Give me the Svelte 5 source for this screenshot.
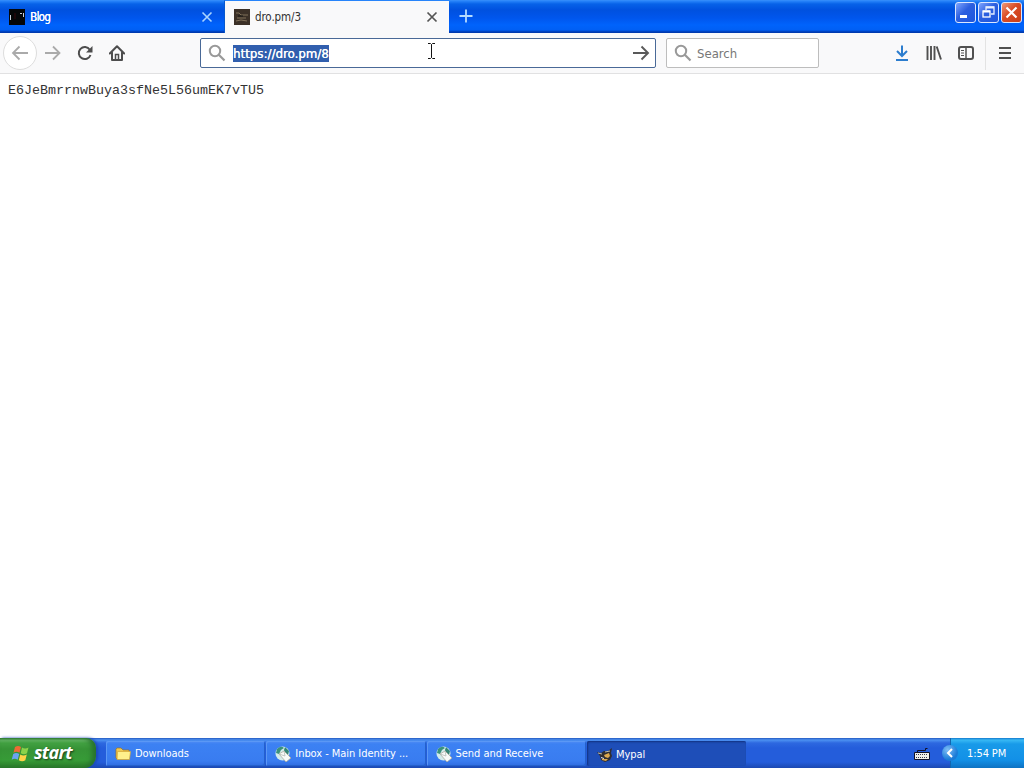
<script>
  const tasks = [
    { label: 'Downloads', icon: 'folder' },
    { label: 'Inbox - Main Identity ...', icon: 'mail' },
    { label: 'Send and Receive', icon: 'mail' },
    { label: 'Mypal', icon: 'mypal', active: true }
  ];
</script>

<div class="screen">
  <header class="titlebar">
    <div class="tab first">
      <svg class="fav" width="16" height="16" viewBox="0 0 16 16"><rect width="16" height="16" fill="#050608" /><path d="M1.500 6v5M14.500 4v4" stroke="#c8ced8" /><path d="M11 4.500h2" stroke="#c8d0dc" fill="none" /><path d="M6 4v6" stroke="#35070b" /></svg>
      <span class="label blog">Blog</span>
      <svg class="close" width="12" height="12" viewBox="0 0 12 12"><path d="M1.500 1.500l9 9M10.500 1.500l-9 9" stroke="#a9d5ff" stroke-width="1.600" /></svg>
    </div>
    <div class="tab active">
      <svg class="fav" width="16" height="16" viewBox="0 0 16 16"><rect width="16" height="16" fill="#3b3027" /><path d="M2 4h3l2 2h7M3 9h9M2 12l5-1 6 1" stroke="#80705a" fill="none" /><path d="M4 7h5" stroke="#151513" /></svg>
      <span class="label">dro.pm/3</span>
      <svg class="close" width="12" height="12" viewBox="0 0 12 12"><path d="M1.500 1.500l9 9M10.500 1.500l-9 9" stroke="#555" stroke-width="1.700" /></svg>
    </div>
    <svg class="plus" width="14" height="14" viewBox="0 0 14 14"><path d="M7 .5v13M.5 7h13" stroke="#b5dcff" stroke-width="1.800" /></svg>
    <div class="controls">
      <span class="ctl"><svg width="19" height="19" viewBox="0 0 19 19"><path d="M4 13.500h7" stroke="#fff" stroke-width="3" /></svg></span>
      <span class="ctl"><svg width="19" height="19" viewBox="0 0 19 19"><path d="M7 7V4h8v7h-3" fill="none" stroke="#e6efff" stroke-width="1.300" /><path d="M7 4.500h8" stroke="#e6efff" stroke-width="2" /><rect x="4" y="8" width="7" height="6" fill="none" stroke="#fff" stroke-width="1.300" /><path d="M4 8.500h7" stroke="#fff" stroke-width="2" /></svg></span>
      <span class="ctl red"><svg width="19" height="19" viewBox="0 0 19 19"><path d="M4.500 4.500l10 10M14.500 4.500l-10 10" stroke="#fff" stroke-width="2.200" /></svg></span>
    </div>
  </header>

  <nav class="toolbar">
    <span class="back"><svg width="18" height="16" viewBox="0 0 18 16"><path d="M17 8H2M8.500 1.500L2 8l6.500 6.500" fill="none" stroke="#aaa" stroke-width="1.800" /></svg></span>
    <svg class="forward" width="18" height="16" viewBox="0 0 18 16"><path d="M1 8h14M9 1.500L15.500 8 9 14.500" fill="none" stroke="#aaa" stroke-width="1.800" /></svg>
    <svg class="reload" width="16" height="16" viewBox="0 0 16 16"><path d="M12.800 4.700A6 6 0 1 0 13.500 10" fill="none" stroke="#4d4d4d" stroke-width="2" /><path d="M15.500 1v6.500H9z" fill="#4d4d4d" /></svg>
    <svg class="home" width="16" height="16" viewBox="0 0 16 16"><path d="M.8 8.500L8 1.300l7.200 7.200M3 7.500V15h10V7.500" fill="none" stroke="#4d4d4d" stroke-width="2" stroke-linejoin="round" stroke-linecap="round" /><path d="M6.500 14V9.500h3V14" fill="none" stroke="#4d4d4d" stroke-width="1.500" /></svg>
    <div class="field url">
      <svg width="18" height="18" viewBox="0 0 18 18"><circle cx="7" cy="7" r="5.200" fill="none" stroke="#999" stroke-width="2" /><path d="M10.800 10.800l5.700 5.700" stroke="#999" stroke-width="2.200" /></svg>
      <span class="address">https://dro.pm/8</span>
      <svg class="caret" width="9" height="16" viewBox="0 0 9 16"><path d="M1 .5h2.500l1 1 1-1H8M4.500 1.500v13M1 15.500h2.500l1-1 1 1H8" fill="none" stroke="#111" /></svg>
      <svg class="go" width="18" height="16" viewBox="0 0 18 16"><path d="M1 8h14.500M9.500 1.500L16 8l-6.500 6.500" fill="none" stroke="#595959" stroke-width="1.900" /></svg>
    </div>
    <div class="field search">
      <svg width="18" height="18" viewBox="0 0 18 18"><circle cx="7" cy="7" r="5.200" fill="none" stroke="#999" stroke-width="2" /><path d="M10.800 10.800l5.700 5.700" stroke="#999" stroke-width="2.200" /></svg>
      <span>Search</span>
    </div>
    <div class="tools">
      <svg width="16" height="16" viewBox="0 0 16 16"><path d="M8 .5v10M3 6l5 5 5-5M2 15h12" fill="none" stroke="#2c7dce" stroke-width="2" /></svg>
      <svg width="16" height="16" viewBox="0 0 16 16"><path d="M1.500 1v14M5 1v14M8.500 1v14M10.700 1.500l4.300 13" fill="none" stroke="#505050" stroke-width="1.900" /></svg>
      <svg width="16" height="16" viewBox="0 0 16 16"><rect x="1" y="2" width="14" height="12" rx="2" fill="none" stroke="#505050" stroke-width="2" /><path d="M8 2v12" stroke="#505050" stroke-width="1.500" /><path d="M3 5.500h3M3 8h3M3 10.500h3" stroke="#505050" /></svg>
      <i></i>
      <svg width="14" height="16" viewBox="0 0 14 16"><path d="M1 3h12M1 8h12M1 13h12" stroke="#505050" stroke-width="2" /></svg>
    </div>
  </nav>

  <main><pre>E6JeBmrrnwBuya3sfNe5L56umEK7vTU5</pre></main>

  <footer class="taskbar">
    <div class="start">
      <svg width="19" height="19" viewBox="0 0 19 19"><path d="M4 3q3-2 6 0L8.500 8.800q-3-2-6 0z" fill="#ef6a35" /><path d="M11 3.400q3 2 6.500 0L16 9.200q-3 2-6.300 0z" fill="#8bd24a" /><path d="M2.200 10q3-2 6 0l-1.500 5.700q-3-2-6 0z" fill="#6ba3f0" /><path d="M9.300 10.400q3 2 6.500 0l-1.500 5.800q-3 2-6.500 0z" fill="#ffd247" /></svg>
      <span>start</span>
    </div>
    <div class="tasks">
      {#each tasks as task}
        <div class="task" class:pressed={task.active}>
          {#if task.icon === 'folder'}
            <svg width="16" height="16" viewBox="0 0 16 16"><path d="M1 12V3l1-1h4l2 2h6v9H2z" fill="#f0c850" stroke="#987127" stroke-width=".7" /><path d="M2.500 5.500H15.500l-1 8H2z" fill="#fff08c" stroke="#d3a535" stroke-width=".7" /></svg>
          {:else if task.icon === 'mail'}
            <svg width="16" height="16" viewBox="0 0 16 16"><circle cx="7.500" cy="7.500" r="7" fill="#d3eceb" /><path d="M2 3q4-4 7-1L6 4 4 8 1 7z" fill="#3b927d" /><path d="M10 1l4 4-1 4-3-2-1-3z" fill="#338676" /><path d="M4 8l5-3 7 7-5 4z" fill="#f8faf8" stroke="#a6a493" stroke-width=".7" /><path d="M4 8l6 2-1-5" fill="none" stroke="#b5bdb5" stroke-width=".8" /></svg>
          {:else}
            <svg width="16" height="16" viewBox="0 0 16 16"><path d="M0 5l4 1 3-2 4 0 4-3-1 5 1 3-2 4-5 2-4-2-1-4z" fill="#302e31" /><path d="M7 8l5-2 1 3-2 2-3-1zM5 12l6 0-2 2-4-1z" fill="#dda94e" /><path d="M1 6l4 1M8 5l5-1" stroke="#bbb8a8" /><path d="M4 10.500l3 1" stroke="#eee" /></svg>
          {/if}
          <span>{task.label}</span>
        </div>
      {/each}
    </div>
    <svg class="keyboard" width="16" height="14" viewBox="0 0 16 14"><path d="M3.500 5V3.500h8V1.500h2" fill="none" stroke="#111126" /><path d="M.5 5.500h15v7H.5z" fill="#f1efe8" stroke="#111126" /><path d="M2 7.500h12M2 10.500h12" stroke="#35384a" stroke-dasharray="1 1" /></svg>
    <div class="tray">
      <span class="chevron"><svg width="8" height="10" viewBox="0 0 8 10"><path d="M6 1L2 5l4 4" fill="none" stroke="#fff" stroke-width="2" /></svg></span>
      <span class="clock">1:54 PM</span>
    </div>
  </footer>
</div>

<style>
  :global(body) { margin: 0; overflow: hidden; }
  .screen { width: 1024px; height: 768px; display: flex; flex-direction: column; background: #fff; font: 11px "DejaVu Sans Condensed", "DejaVu Sans", sans-serif; font-stretch: condensed; color: #303030; }
  svg { display: block; flex: none; }
  .titlebar { height: 33px; flex: none; box-sizing: border-box; display: flex; align-items: flex-start; background: linear-gradient(#3b91fa 0, #2784fa 1px, #0762e8 4px, #0051df 10px, #0056ed 18px, #0063fc 25px, #005ff4 30px, #003ab0 32px, #003ab0); }
  .tab { width: 224px; height: 33px; display: flex; align-items: center; box-sizing: border-box; padding: 0 11px 0 9px; }
  .first { color: #fff; }
  .active { width: 225px; padding: 0 11px 1px 9px; background: #f9f9fa; border-left: 1px solid #0758ce; border-top: 1px solid #2784fa; }
  .label { flex: 1; margin-left: 5px; font-size: 11.500px; letter-spacing: -.1px; }
  .blog { letter-spacing: -.7px; text-shadow: .3px 0 #fff; }
  .plus { margin: 9px 0 0 10px; }
  .controls { display: flex; gap: 2px; margin: 2px 2px 0 auto; }
  .ctl { width: 21px; height: 21px; box-sizing: border-box; border: 1px solid #dbe7ff; border-radius: 3px; background: linear-gradient(135deg, #7fa5ff, #2c5fdf 45%, #1c56de); }
  .red { background: linear-gradient(135deg, #ef9979, #da4c25 45%, #c93f19); }
  .toolbar { height: 41px; flex: none; box-sizing: border-box; border-bottom: 1px solid #e1e1e2; background: #f9f9fa; display: flex; align-items: center; }
  .back { width: 32px; height: 32px; border: 1px solid #ddd; border-radius: 50%; display: flex; align-items: center; justify-content: center; background: #fff; margin-left: 3px; }
  .forward { margin-left: 7px; }
  .reload { margin-left: 15px; }
  .home { margin-left: 16px; }
  .field { height: 30px; box-sizing: border-box; display: flex; align-items: center; border: 1px solid #bdbdbd; border-radius: 2px; background: #fff; font-size: 13px; }
  .url { width: 456px; margin-left: 75px; padding: 0 5px 0 7px; border-color: #496997; }
  .address { background: #315fae; color: #fff; margin-left: 7px; height: 17px; line-height: 17px; letter-spacing: .06px; text-shadow: .3px 0 #fff; }
  .caret { margin: -5px 0 0 98px; }
  .go { margin-left: auto; }
  .search { width: 153px; margin-left: 10px; padding-left: 7px; color: #777; }
  .search span { margin-left: 5px; }
  .tools { display: flex; align-items: center; gap: 16px; margin: 0 12px 0 auto; }
  .tools i { width: 1px; height: 33px; background: #e3e3e3; margin: 0 -4px 0 -5px; }
  main { flex: 1; box-sizing: border-box; padding: 9px 8px; }
  pre { margin: 0; font: 13.333px/15px "Liberation Mono", monospace; color: #333; }
  .taskbar { height: 30px; flex: none; display: flex; align-items: stretch; background: linear-gradient(#245ac1 0, #4c91f1 2px, #2d68e0 5px, #245ddb 10px, #245ddb 24px, #1b48b1 30px); color: #fff; }
  .start { width: 96px; box-sizing: border-box; padding-left: 11px; display: flex; align-items: center; gap: 4px; border-radius: 0 10px 12px 0; background: linear-gradient(#327d32 0, #68b968 2px, #42a142 5px, #369336 11px, #379b37 22px, #297a29 30px); box-shadow: inset -4px 0 5px #28722d, 2px 0 3px #1c49b6; }
  .start span { font: italic bold 18px "Open Sans", "Noto Sans", sans-serif; letter-spacing: -.7px; text-shadow: 1px 1px 2px #173a18; margin-top: -3px; }
  .tasks { display: flex; gap: 1px; padding: 3px 0 2px; margin-left: 10px; }
  .task { width: 159.300px; box-sizing: border-box; padding-left: 9px; display: flex; align-items: center; gap: 4px; border-radius: 2px; background: linear-gradient(#528df4 0, #3c81f3 3px, #397cf0 20px, #2f6be0); box-shadow: inset 1px 1px #5b98f5, inset -1px -1px #2461cc; white-space: nowrap; letter-spacing: -.05px; }
  .pressed { background: #1e4eb8; box-shadow: inset 1px 1px 2px #12327f; padding-top: 2px; padding-left: 10px; gap: 3px; }
  .keyboard { margin: 9px 20px 0 auto; }
  .tray { width: 74px; box-sizing: border-box; display: flex; align-items: center; background: linear-gradient(#1378cc 0, #38b8f4 2px, #189ae9 6px, #1290e7 22px, #0e72c2 30px); border-left: 1px solid #1266af; }
  .chevron { width: 16px; height: 16px; border-radius: 50%; background: radial-gradient(circle at 35% 30%, #7fbdf7, #197bd7 65%); display: flex; align-items: center; justify-content: center; margin-left: -9px; }
  .clock { margin-left: 9px; letter-spacing: -.1px; white-space: nowrap; }
</style>
